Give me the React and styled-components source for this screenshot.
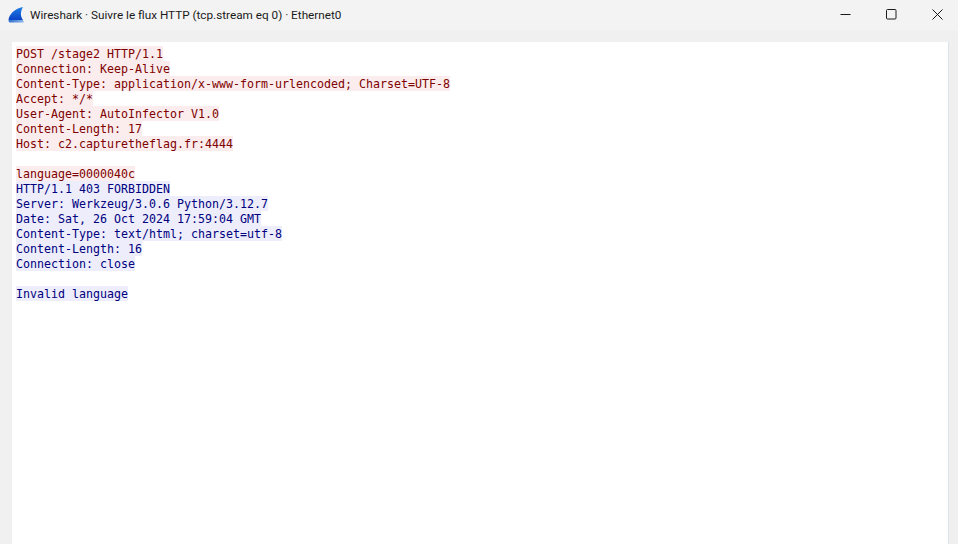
import React from 'react'
import styled, { createGlobalStyle } from 'styled-components'

const GlobalStyle = createGlobalStyle`
  html, body {
    margin: 0;
    padding: 0;
    height: 100%;
    overflow: hidden;
    background: #f0f0f0;
  }
`;

const Window = styled.div`
  width: 958px;
  height: 544px;
  display: flex;
  flex-direction: column;
  background: #f0f0f0;
  overflow: hidden;
`;

const TitleBar = styled.div`
  height: 30px;
  flex: none;
  display: flex;
  align-items: center;
  padding-left: 8px;
  background: #f3f3f3;
`;

const Title = styled.div`
  margin: 0 0 1px 6px;
  font-family: Roboto, sans-serif;
  font-size: 11.74px;
  color: #1a1a1a;
  white-space: nowrap;
  flex: 1;
`;

const WinButtons = styled.div`
  display: flex;
  margin: 0 -2px 1px 0;
`;

const WinButton = styled.div`
  width: 46px;
  height: 29px;
  display: flex;
  align-items: center;
  justify-content: center;
`;

const StreamPanel = styled.div`
  flex: 1;
  margin: 12px 9px 0 12px;
  padding: 4px 4px 0;
  background: #ffffff;
  border-right: 1px solid #dde3ee;
  font-family: "DejaVu Sans Mono", monospace;
  font-size: 11.63px;
`;

const Line = styled.div`
  height: 15px;
  white-space: pre;
`;

const Chunk = styled.span`
  display: inline-block;
  height: 15px;
  line-height: 17px;
  vertical-align: top;
  color: ${props => (props.$side === 'client' ? '#7f0000' : '#00007f')};
  background: ${props => (props.$side === 'client' ? '#fbeded' : '#ededfb')};
`;

const clientLines = [
  'POST /stage2 HTTP/1.1',
  'Connection: Keep-Alive',
  'Content-Type: application/x-www-form-urlencoded; Charset=UTF-8',
  'Accept: */*',
  'User-Agent: AutoInfector V1.0',
  'Content-Length: 17',
  'Host: c2.capturetheflag.fr:4444',
  '',
  'language=0000040c',
]

const serverLines = [
  'HTTP/1.1 403 FORBIDDEN',
  'Server: Werkzeug/3.0.6 Python/3.12.7',
  'Date: Sat, 26 Oct 2024 17:59:04 GMT',
  'Content-Type: text/html; charset=utf-8',
  'Content-Length: 16',
  'Connection: close',
  '',
  'Invalid language',
]

const SharkIcon = () => (
  <svg width="16" height="16" viewBox="0 0 16 16">
    <defs>
      <linearGradient id="fin" x1="0" y1="0" x2="0" y2="1">
        <stop offset="0" stopColor="#1c7ee8" />
        <stop offset="1" stopColor="#0b43c4" />
      </linearGradient>
      <linearGradient id="base" x1="0" y1="0" x2="1" y2="0">
        <stop offset="0" stopColor="#2f6fd0" />
        <stop offset="1" stopColor="#8db8e8" />
      </linearGradient>
    </defs>
    <path d="M0.5 13 C1 7 7 1.5 15 0 C12.5 4 12 9 15 13 Z" fill="url(#fin)" />
    <path d="M0.5 13 H15 L16 15.5 H2 Q0.5 15.5 0.5 13 Z" fill="url(#base)" />
  </svg>
)

const App = () => {
  const renderLine = (text, side, key) => (
    <Line key={key}>{text && <Chunk $side={side}>{text}</Chunk>}</Line>
  )

  return (
    <Window>
      <GlobalStyle />
      <TitleBar>
        <SharkIcon />
        <Title>Wireshark · Suivre le flux HTTP (tcp.stream eq 0) · Ethernet0</Title>
        <WinButtons>
          <WinButton>
            <svg width="11" height="11" viewBox="0 0 11 11">
              <path d="M0.5 5.5 H10.5" stroke="#1a1a1a" fill="none" />
            </svg>
          </WinButton>
          <WinButton>
            <svg width="11" height="11" viewBox="0 0 11 11">
              <rect x="0.5" y="0.5" width="9.5" height="9.5" rx="1" stroke="#1a1a1a" fill="none" />
            </svg>
          </WinButton>
          <WinButton>
            <svg width="11" height="11" viewBox="0 0 11 11">
              <path d="M0.5 0.5 L10.5 10.5 M10.5 0.5 L0.5 10.5" stroke="#1a1a1a" fill="none" />
            </svg>
          </WinButton>
        </WinButtons>
      </TitleBar>
      <StreamPanel>
        {clientLines.map((text, i) => renderLine(text, 'client', `c${i}`))}
        {serverLines.map((text, i) => renderLine(text, 'server', `s${i}`))}
      </StreamPanel>
    </Window>
  )
}

export default App
